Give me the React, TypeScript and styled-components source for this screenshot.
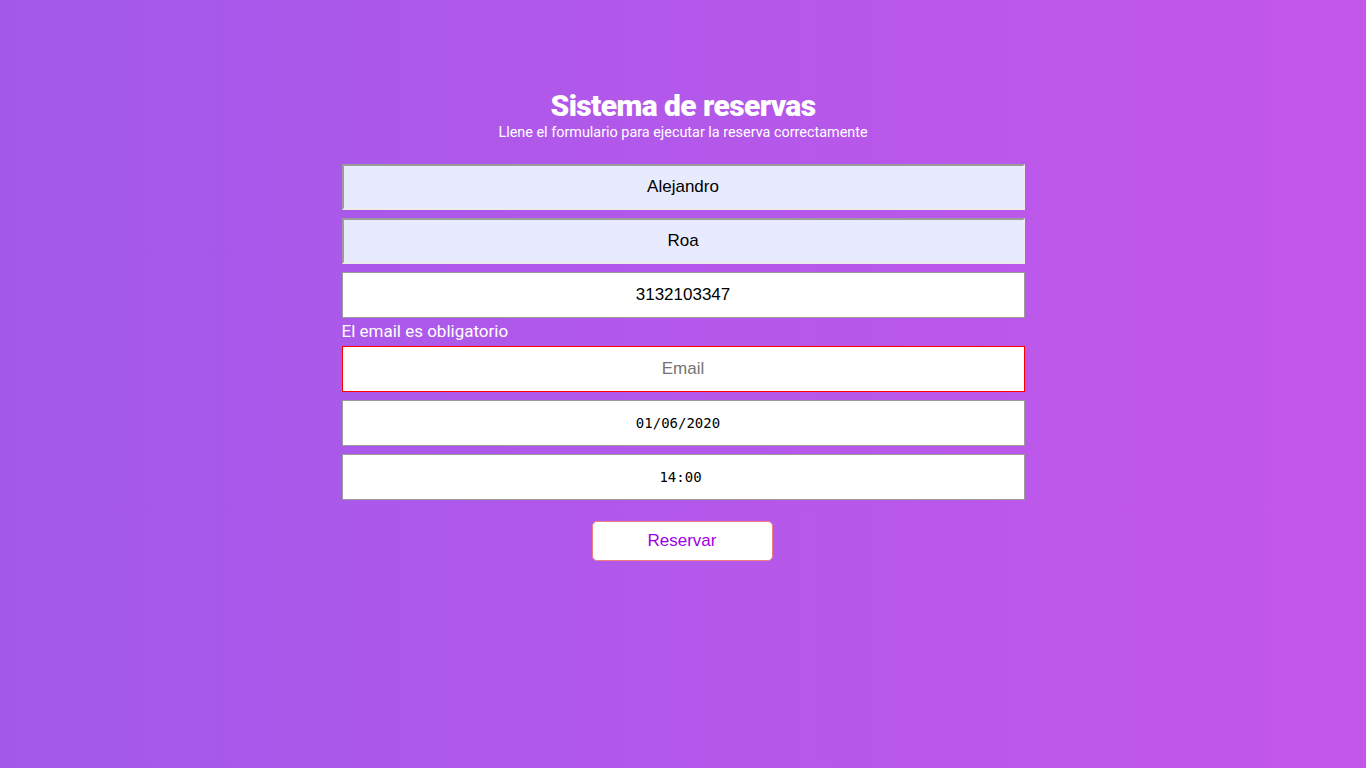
import React from "react";
import styled, { createGlobalStyle } from "styled-components";

const Global = createGlobalStyle`
  html, body { margin: 0; padding: 0; }
  body {
    min-height: 768px;
    background: linear-gradient(90deg, #a259ea 0%, #c457ea 100%);
    font-family: Roboto, "Liberation Sans", sans-serif;
  }
`;

const Page = styled.div`
  min-height: 768px;
  display: flex;
  flex-direction: column;
  align-items: center;
  padding-top: 88px;
  box-sizing: border-box;
`;

const Title = styled.h1`
  margin: 0;
  font-family: Roboto, sans-serif;
  font-weight: 900;
  font-size: 30px;
  line-height: 36px;
  color: #fff;
  letter-spacing: -0.6px;
`;

const Subtitle = styled.p`
  margin: 1px 0 0;
  font-family: Roboto, sans-serif;
  font-size: 14.4px;
  line-height: 16px;
  color: #fff;
`;

const Form = styled.form`
  width: 683px;
  margin-top: 23px;
  display: flex;
  flex-direction: column;
  gap: 8px;
`;

const Field = styled.input<{ $filled?: boolean; $error?: boolean; $mono?: boolean; $shift?: number }>`
  box-sizing: border-box;
  width: 100%;
  height: 46px;
  margin: 0;
  padding: 0 ${(p) => 8 + (p.$shift || 0)}px 0 8px;
  text-align: center;
  outline: none;
  color: #000;
  font-family: ${(p) => (p.$mono ? '"DejaVu Sans Mono", monospace' : '"Liberation Sans", Arial, sans-serif')};
  font-size: ${(p) => (p.$mono ? "14px" : "17px")};
  background: ${(p) => (p.$filled ? "#e8ebfd" : "#fff")};
  border-style: solid;
  border-width: ${(p) => (p.$filled ? "2px" : "1px")};
  border-color: ${(p) =>
    p.$error ? "#ff0000" : p.$filled ? "#9b9b9b #ececec #ececec #9b9b9b" : "#9a9a9a"};
  &::placeholder {
    color: #757575;
  }
`;

const ErrorText = styled.span`
  display: block;
  font-family: Roboto, sans-serif;
  font-size: 17px;
  line-height: 19px;
  color: #fff;
  margin-top: -4px;
  margin-bottom: -3px;
`;

const ButtonRow = styled.div`
  display: flex;
  justify-content: center;
  margin-top: 14px;
`;

const Button = styled.button`
  width: 181px;
  height: 40px;
  margin-left: -2px;
  margin-top: -1px;
  background: #fff;
  border: 1px solid #f08080;
  border-radius: 5px;
  color: #a000e8;
  font-family: "Liberation Sans", Arial, sans-serif;
  font-size: 17px;
  cursor: pointer;
`;

export default function App() {
  return (
    <>
      <Global />
      <Page>
        <Title>Sistema de reservas</Title>
        <Subtitle>Llene el formulario para ejecutar la reserva correctamente</Subtitle>
        <Form onSubmit={(e) => e.preventDefault()}>
          <Field $filled readOnly value="Alejandro" />
          <Field $filled readOnly value="Roa" />
          <Field readOnly value="3132103347" />
          <ErrorText>El email es obligatorio</ErrorText>
          <Field $error placeholder="Email" />
          <Field $mono $shift={10} readOnly value="01/06/2020" />
          <Field $mono $shift={5} readOnly value="14:00" />
          <ButtonRow>
            <Button type="submit">Reservar</Button>
          </ButtonRow>
        </Form>
      </Page>
    </>
  );
}
